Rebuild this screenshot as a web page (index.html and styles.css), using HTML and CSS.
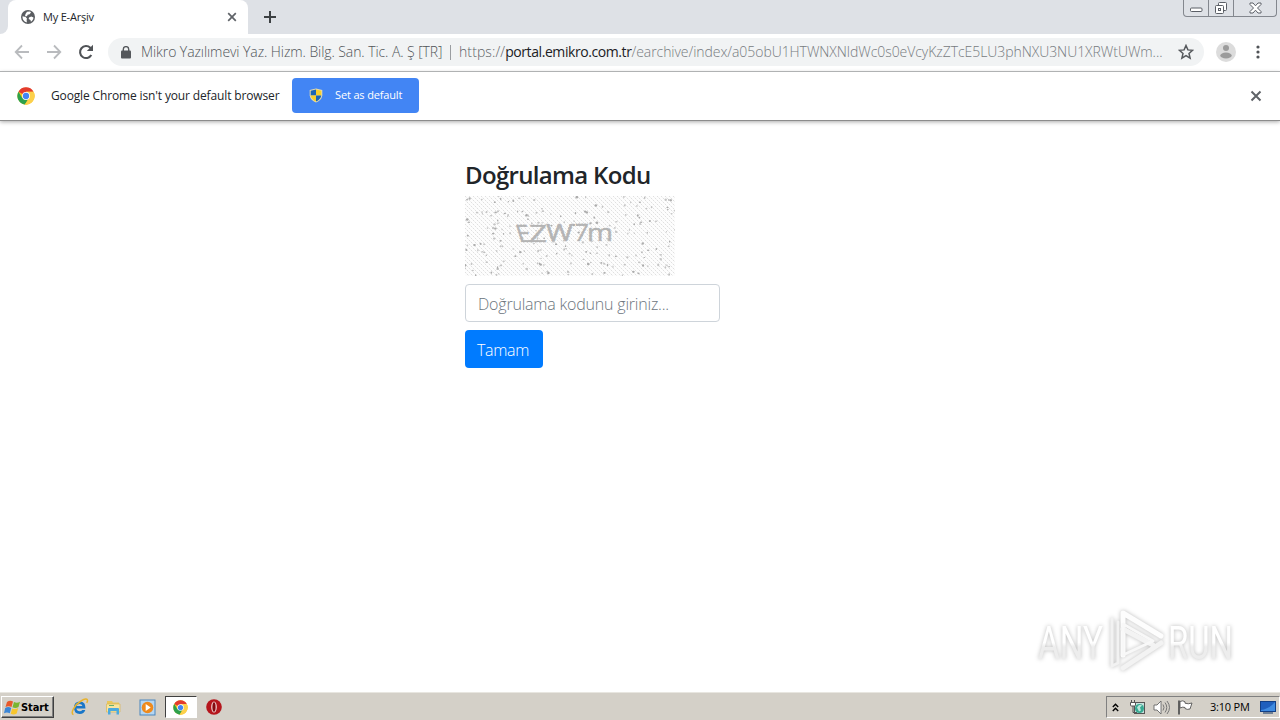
FILE: index.html
```html
<!DOCTYPE html>
<html lang="tr">
<head>
    <meta charset="UTF-8">
    <meta name="viewport" content="width=device-width, initial-scale=1.0">
    <title>My E-Arşiv</title>
    <link rel="stylesheet" href="styles.css">
</head>
<body>
    <svg width="0" height="0" class="defs">
        <symbol id="chrome" viewBox="0 0 24 24">
            <circle cx="12" cy="12" r="11.5" fill="#fbc116"/>
            <path d="M12 12 2 6.2A11.5 11.5 0 0 1 22 6.3H12z" fill="#e33b2e"/>
            <path d="M2 6.2A11.5 11.5 0 0 0 10.5 23.4L15 16 12 12 7 14.8z" fill="#2da14c"/>
            <path d="M22 6.3A11.5 11.5 0 0 1 10.5 23.4L16 15 12 6.3z" fill="#fcd04b"/>
            <circle cx="12" cy="12" r="5.2" fill="#fff"/>
            <circle cx="12" cy="12" r="4.2" fill="#4285f4"/>
        </symbol>
    </svg>

    <div class="tab-strip">
        <div class="prev-tab"></div>
        <div class="tab">
            <svg class="globe" width="14" height="14" viewBox="0 0 14 14">
                <circle cx="7" cy="7" r="7" fill="#5a5d61"/>
                <path d="M1.6 6.3 4.6 7l1.500 1.700-.5 1.100.3 2.600C3.200 12 1.200 9.500 1.600 6.300zM6 1.700l3-.1 1 1-1.400 1.700-2 .4-.6 1.500H4L4.500 4zM8 7.500l2.200-1 2.300.9c-.2 2-1.200 3.500-2.600 4.400L9.500 9.900 7.700 9z" fill="#fff"/>
            </svg>
            <span class="tab-title">My E-Arşiv</span>
            <svg class="tab-close" width="10" height="10" viewBox="0 0 10 10"><path d="M1.200 1.200l7.600 7.600M8.800 1.200 1.200 8.800" stroke="#5f6368" stroke-width="1.700"/></svg>
        </div>
        <svg class="new-tab" width="14" height="14" viewBox="0 0 14 14"><path d="M7 1v12M1 7h12" stroke="#3c4043" stroke-width="2"/></svg>
        <div class="window-buttons">
            <div class="wb">
                <svg width="13" height="6" viewBox="0 0 13 6"><rect x=".5" y="1" width="11.500" height="3.500" rx="1" fill="#fff" stroke="#5b5f66"/></svg>
            </div>
            <div class="wb">
                <svg width="14" height="14" viewBox="0 0 14 14"><g fill="#fff" stroke="#5b5f66"><rect x="4.500" y="1.500" width="8" height="8" rx="1"/><rect x="1.500" y="4.500" width="8" height="8" rx="1"/><rect x="4.500" y="7.500" width="2" height="2"/></g></svg>
            </div>
            <div class="wb wide">
                <svg width="13" height="12" viewBox="0 0 13 12"><path d="M1 1h3l2.500 2.800L9 1h3v1.500L8.500 6 12 9.500V11H9L6.500 8.200 4 11H1V9.500L4.500 6 1 2.500z" fill="#fff" stroke="#5b5f66"/></svg>
            </div>
        </div>
    </div>

    <div class="toolbar">
        <svg class="nav" width="16" height="16" viewBox="0 0 16 16"><path d="M15 8H2M8 1.500 1.700 8 8 14.500" fill="none" stroke="#b9bbbe" stroke-width="1.800"/></svg>
        <svg class="nav" width="16" height="16" viewBox="0 0 16 16"><path d="M1 8h13M8 1.500 14.300 8 8 14.500" fill="none" stroke="#b9bbbe" stroke-width="1.800"/></svg>
        <svg class="nav" width="16" height="16" viewBox="0 0 16 16"><path d="M13.300 11A6 6 0 1 1 12.300 3.800L14 5.500" fill="none" stroke="#505357" stroke-width="2.100"/><path d="M15 .8V7H8.800z" fill="#505357"/></svg>
        <div class="omnibox">
            <svg class="lock" width="10" height="13" viewBox="0 0 10 13"><rect y="4.500" width="10" height="8" rx="1" fill="#55585c"/><path d="M2.300 5V3.300a2.700 2.700 0 0 1 5.400 0V5" fill="none" stroke="#55585c" stroke-width="1.400"/></svg>
            <span class="owner">Mikro Yazılımevi Yaz. Hizm. Bilg. San. Tic. A. Ş [TR]</span>
            <span class="sep"></span>
            <span class="url"><span class="scheme">https://</span><span class="host">portal.emikro.com.tr</span><span class="path">/earchive/index/a05obU1HTWNXNldWc0s0eVcyKzZTcE5LU3phNXU3NU1XRWtUWm...</span></span>
            <svg class="star" width="16" height="16" viewBox="0 0 16 16"><path d="M8 1.500l1.900 4.400 4.700.4-3.600 3.100 1.100 4.700L8 11.600l-4.100 2.500L5 9.400 1.400 6.300l4.700-.4z" fill="none" stroke="#55585c" stroke-width="1.500"/></svg>
        </div>
        <svg class="avatar" width="20" height="20" viewBox="0 0 20 20"><circle cx="10" cy="10" r="10" fill="#dcdcdc"/><circle cx="10" cy="6" r="3" fill="#9b9b9b"/><ellipse cx="10" cy="13.500" rx="5.700" ry="3" fill="#9b9b9b"/></svg>
        <svg class="menu" width="4" height="16" viewBox="0 0 4 16"><g fill="#505357"><circle cx="2" cy="3" r="1.600"/><circle cx="2" cy="8" r="1.600"/><circle cx="2" cy="13" r="1.600"/></g></svg>
    </div>

    <div class="infobar">
        <svg class="info-logo" width="18" height="18"><use href="#chrome"/></svg>
        <span class="info-text">Google Chrome isn't your default browser</span>
        <button class="set-default">
            <svg width="14" height="15" viewBox="0 0 14 15"><path d="M7 .5 13.300 2v5.500Q12.500 12.500 7 14.500 1.500 12.500.7 7.500V2z" fill="#e6dcae"/><path d="M7 1.500v6H1.700V2.800z" fill="#1c66b5"/><path d="M7 1.500v6h5.300V2.800zM7 7.500v6Q2.500 11.500 1.700 7.500z" fill="#f8d02c"/><path d="M7 7.500v6q4.500-2 5.300-6z" fill="#1c66b5"/></svg>
            <span>Set as default</span>
        </button>
        <svg class="info-close" width="12" height="12" viewBox="0 0 12 12"><path d="M1.500 1.500l9 9M10.500 1.500l-9 9" stroke="#5f6368" stroke-width="2"/></svg>
    </div>

    <div class="page">
        <form class="verify">
            <h1>Doğrulama Kodu</h1>
            <svg class="captcha" width="210" height="80" viewBox="0 0 210 80">
                <defs>
                    <pattern id="hatch" width="4" height="4" patternUnits="userSpaceOnUse">
                        <rect width="4" height="4" fill="#fdfdfd"/>
                        <path d="M0 0h1v1H0zM2 2h1v1H2z" fill="#e0e0e0"/>
                        <path d="M1 1h1v1H1zM3 3h1v1H3z" fill="#f2f2f2"/>
                    </pattern>
                </defs>
                <rect width="210" height="80" fill="url(#hatch)"/>
                <g id="noise"></g>
                <g class="code">
                    <text transform="translate(54 46) skewX(17)" textLength="14" lengthAdjust="spacingAndGlyphs">E</text>
                    <text x="64" y="46" textLength="18" lengthAdjust="spacingAndGlyphs">Z</text>
                    <text x="81" y="45" textLength="27" lengthAdjust="spacingAndGlyphs">W</text>
                    <text transform="translate(109 45) skewX(-3)" textLength="14" lengthAdjust="spacingAndGlyphs">7</text>
                    <text x="122" y="45" textLength="26" lengthAdjust="spacingAndGlyphs">m</text>
                </g>
            </svg>
            <input type="text" placeholder="Doğrulama kodunu giriniz...">
            <button type="button" class="ok">Tamam</button>
        </form>
        <div class="watermark">
            <svg width="240" height="72" viewBox="0 0 240 72">
                <defs>
                    <linearGradient id="fade" x2="0" y2="1"><stop offset=".5" stop-color="#fff"/><stop offset=".58" stop-color="#ededed"/></linearGradient>
                </defs>
                <text x="8" y="55" textLength="65" lengthAdjust="spacingAndGlyphs">ANY</text>
                <g fill="none" stroke-width="5" stroke-linejoin="round" stroke-linecap="round">
                    <path d="M93 51V9L131 32" stroke="#fdfdfd"/>
                    <path d="M82 15v47l6-3V18" stroke="#f2f2f2" stroke-width="3"/>
                    <path d="M93 25l30 16M93 64l38-25" stroke="#f3f3f3"/>
                    <path d="M93 51l30-14-30-17z" stroke="#f8f8f8" stroke-width="3"/>
                </g>
                <text x="138" y="55" textLength="65" lengthAdjust="spacingAndGlyphs">RUN</text>
            </svg>
        </div>
    </div>

    <div class="taskbar">
        <div class="start">
            <svg width="17" height="15" viewBox="0 0 17 15"><path d="M3 2Q6-.2 9 1.500L7.500 7Q4.500 5.500 1.500 7z" fill="#e8592b"/><path d="M10 2q3 1.500 6-.3L14.500 7q-3 1.800-6 .2z" fill="#7ab530"/><path d="M1.200 8q3-1.800 6-.1l-1.400 5.300q-3-1.500-5.800.1z" fill="#3c86d6"/><path d="M8.200 8.400q3 1.500 6-.3L12.700 13.500q-3 1.800-6 .3z" fill="#f8c62d"/></svg>
            <span>Start</span>
        </div>
        <div class="launch">
            <svg width="18" height="18" viewBox="0 0 18 18"><path d="M14.500 10.500H5.500q.4 2.700 3.200 2.700 1.800 0 2.600-1.200h3Q13 16 8.800 16 3 16 3 9.800T8.900 3.500q5.800 0 5.600 7zM5.600 8h5.800Q11 6 8.600 6T5.600 8z" fill="#1976c8"/><path d="M2.500 16.500C-1 16 3 7 10 3q6-3.500 6.500-.8.200 1-.8 2.600" fill="none" stroke="#e9b32c" stroke-width="1.500"/></svg>
        </div>
        <div class="launch">
            <svg width="17" height="17" viewBox="0 0 17 17"><path d="M2 2h5l1 1.500h6V13H2z" fill="#eac75c"/><path d="M1.500 5h13.500v8H1.500z" fill="#f8e5a0" stroke="#d9b657" stroke-width=".7"/><path d="M3 15.500V10q0-1 1-1h9q1 0 1 1v5.500h-2.500V12h-6v3.500z" fill="#4ba9de"/><path d="M4 6.500h5" stroke="#67b06a"/></svg>
        </div>
        <div class="launch">
            <svg width="17" height="17" viewBox="0 0 17 17"><rect x="1" y="1" width="15" height="15" fill="#b5d6f2" stroke="#4a86bd"/><circle cx="8.500" cy="8.500" r="5.800" fill="#ee8a1d"/><path d="M6.700 5v7l5-3.500z" fill="#fff"/></svg>
        </div>
        <div class="launch active">
            <svg width="15" height="15"><use href="#chrome"/></svg>
        </div>
        <div class="launch">
            <svg width="16" height="16" viewBox="0 0 16 16"><circle cx="8" cy="8" r="7.800" fill="#b5151c"/><ellipse cx="8" cy="8" rx="2.800" ry="5.500" fill="#f5dada"/><ellipse cx="8" cy="8" rx="1.600" ry="4.700" fill="#85090f"/></svg>
        </div>
        <div class="tray">
            <svg class="chevrons" width="7" height="9" viewBox="0 0 7 9"><path d="M.8 4 3.500 1.300 6.200 4M.8 8 3.500 5.300 6.200 8" fill="none" stroke="#000" stroke-width="1.400"/></svg>
            <svg width="17" height="16" viewBox="0 0 17 16"><rect x="5.500" y="3.500" width="10" height="11" fill="#c5e0dc" stroke="#555"/><path d="M1.500 3.500h5V6q0 1-1 1h-3q-1 0-1-1z" fill="#fff" stroke="#555"/><path d="M2.500 1v2.500M5.500 1v2.500M4 7v6.500h4" fill="none" stroke="#555"/><circle cx="10.500" cy="9.500" r="4.500" fill="#36a890"/><path d="M8 8.500q2-4 5-2l-2 2 1 3-2 1z" fill="#b9e5da"/></svg>
            <svg width="17" height="15" viewBox="0 0 17 15"><path d="M1 5h3l4-4v13l-4-4H1z" fill="#fff" stroke="#666" stroke-width=".9"/><path d="M10 4.500q2 3 0 6M12 2.500q3.500 5 0 10M14 1q5 6.500 0 13" fill="none" stroke="#777"/></svg>
            <svg width="17" height="15" viewBox="0 0 17 15"><path d="M2 .5v14" stroke="#555" stroke-width="1.800"/><path d="M3 1.500q3-1.500 5 .3v1.400q3 1.200 7-.2l-2 6q-3 1-5-.5v-1Q6 6.500 3 8z" fill="#fff" stroke="#555" stroke-width=".9"/></svg>
            <span class="clock">3:10 PM</span>
            <svg class="desktop" width="16" height="13" viewBox="0 0 16 13"><rect x=".5" y=".5" width="15" height="10" fill="#1f5fbd" stroke="#123f85"/><path d="M1 9Q9 8 15 1v9H1z" fill="#3f8be0"/><path d="M3 12h10" stroke="#506784" stroke-width="1.500"/></svg>
        </div>
    </div>

    <script>
        const noise = document.getElementById('noise');
        let seed = 37;

        function rnd() {
            seed = (seed * 16807) % 2147483647;
            return seed / 2147483647;
        }

        // speckles behind the code
        for (let i = 0; i < 210; i++) {
            const dot = document.createElementNS('http://www.w3.org/2000/svg', 'ellipse');
            dot.setAttribute('cx', rnd() * 210);
            dot.setAttribute('cy', rnd() * 80);
            dot.setAttribute('rx', 0.6 + rnd() * 0.8);
            dot.setAttribute('ry', 0.6 + rnd() * 0.7);
            dot.setAttribute('fill', rnd() > 0.5 ? '#adadad' : '#c6c6c6');
            noise.appendChild(dot);
        }
    </script>
</body>
</html>
```
FILE: styles.css
```css
* {
    box-sizing: border-box;
}
body {
    margin: 0;
    height: 720px;
    overflow: hidden;
    display: flex;
    flex-direction: column;
    background-color: #fff;
    font-family: "Open Sans", "Noto Sans", sans-serif;
    color: #212529;
}
svg {
    display: block;
    flex: none;
}
.defs {
    position: absolute;
}
span {
    white-space: nowrap;
}
.tab-strip {
    height: 34px;
    flex: none;
    display: flex;
    background-color: #dee1e6;
}
.prev-tab {
    width: 8px;
    background-color: #fff;
}
.prev-tab::before {
    content: "";
    display: block;
    height: 34px;
    background-color: #dee1e6;
    border-bottom-right-radius: 8px;
}
.tab {
    width: 240px;
    display: flex;
    align-items: center;
    padding: 0 11px 0 13px;
    background-color: #fff;
    border-radius: 8px 8px 0 0;
}
.tab-title {
    margin: -2px 0 0 8px;
    font-size: 11px;
    letter-spacing: -0.2px;
}
.tab-close {
    margin-left: auto;
}
.new-tab {
    margin: 10px 0 0 15px;
}
.window-buttons {
    margin: 0 3px 0 auto;
    height: 17px;
    display: flex;
    border: 1px solid #83878e;
    border-top: none;
    border-radius: 0 0 4px 4px;
}
.wb {
    width: 25px;
    display: flex;
    align-items: center;
    justify-content: center;
    border-right: 1px solid #83878e;
}
.wb:first-child svg {
    margin-top: 4px;
}
.wb.wide {
    width: 42px;
    border-right: none;
}
.toolbar {
    height: 38px;
    flex: none;
    display: flex;
    align-items: center;
    padding: 0 20px 1px 14px;
    border-bottom: 1px solid #b2b4b6;
}
.nav {
    margin-right: 16px;
}
.omnibox {
    width: 1096px;
    height: 28px;
    margin-left: -2px;
    display: flex;
    align-items: center;
    padding: 0 10px 0 13px;
    background-color: #f1f3f4;
    border-radius: 14px;
    font-size: 14px;
    font-weight: 300;
    color: #5f6368;
}
.owner {
    width: 302px;
    margin: -2px 0 0 10px;
    letter-spacing: -0.08px;
    color: #505458;
}
.sep {
    width: 1px;
    height: 15px;
    margin: 0 8px 0 7px;
    background-color: #9a9da1;
}
.url {
    margin-top: -2px;
    letter-spacing: 0.1px;
}
.host {
    color: #202124;
    font-weight: 400;
    letter-spacing: -0.42px;
}
.path {
    color: #777b80;
    letter-spacing: -0.06px;
}
.star {
    margin-left: auto;
}
.avatar {
    margin-left: 12px;
}
.menu {
    margin-left: auto;
}
.infobar {
    position: relative;
    height: 49px;
    flex: none;
    display: flex;
    align-items: center;
    padding: 0 18px 0 17px;
    border-bottom: 1px solid #8c8c8c;
    box-shadow: 0 1px 4px #aaa;
}
.info-text {
    width: 229px;
    margin: -1px 0 0 16px;
    font-size: 12px;
    letter-spacing: -0.14px;
}
.set-default {
    width: 127px;
    height: 35px;
    margin: -1px 0 0 12px;
    display: flex;
    align-items: center;
    padding: 0 0 0 17px;
    gap: 12px;
    border: none;
    border-radius: 4px;
    background-color: #4285f4;
    color: #fff;
    font-family: inherit;
    font-size: 11px;
    letter-spacing: -0.15px;
}
.set-default span {
    margin-top: -2px;
}
.info-close {
    margin-left: auto;
}
.page {
    position: relative;
    flex: 1;
    display: flex;
    justify-content: center;
}
.verify {
    width: 350px;
    margin-top: 39px;
    display: flex;
    flex-direction: column;
    align-items: flex-start;
}
.verify h1 {
    margin: 0 0 6px;
    font-size: 24px;
    line-height: 30px;
    font-weight: 600;
    letter-spacing: -0.67px;
}
.captcha {
    margin-bottom: 8px;
}
.code text {
    font-family: "Open Sans", sans-serif;
    font-size: 24px;
    fill: #b4b4b4;
    stroke: #b4b4b4;
    stroke-width: 0.7px;
    stroke-dasharray: 2 1;
}
.verify input {
    width: 255px;
    height: 38px;
    margin-bottom: 8px;
    padding: 1px 12px 0;
    border: 1px solid #ced4da;
    border-radius: 4px;
    font-family: inherit;
    font-size: 16px;
    font-weight: 300;
    letter-spacing: -0.2px;
}
.verify input::placeholder {
    color: #6c757d;
}
.ok {
    width: 78px;
    height: 38px;
    padding: 1px 2px 0 0;
    border: none;
    border-radius: 4px;
    background-color: #007bff;
    color: #fff;
    font-family: inherit;
    font-size: 16px;
    font-weight: 300;
    letter-spacing: -0.3px;
}
.watermark {
    position: absolute;
    right: 10px;
    bottom: 16px;
    filter: drop-shadow(0 0 2px #bbb);
}
.watermark text {
    font-family: Roboto, sans-serif;
    font-size: 47px;
    font-weight: 400;
    fill: url(#fade);
}
.taskbar {
    height: 28px;
    flex: none;
    display: flex;
    align-items: center;
    padding: 1px 0 0 1px;
    background-color: #d4d0c8;
    border-top: 1px solid #e8e6e0;
}
.start {
    width: 53px;
    height: 22px;
    margin-right: 10px;
    display: flex;
    align-items: center;
    padding-left: 2px;
    border: 1px solid;
    border-color: #fff #404040 #404040 #fff;
    box-shadow: inset -1px -1px #808080;
    font-family: "DejaVu Sans Condensed", "DejaVu Sans", sans-serif;
    font-size: 11px;
    font-weight: 700;
    letter-spacing: -0.1px;
    color: #000;
}
.launch {
    width: 32px;
    height: 22px;
    margin-right: 1.5px;
    display: flex;
    align-items: center;
    justify-content: center;
}
.launch.active {
    background-color: #fff;
    border: 1px solid;
    border-color: #404040 #fff #fff #404040;
}
.tray {
    width: 174px;
    height: 22px;
    margin-left: auto;
    display: flex;
    align-items: center;
    gap: 7px;
    padding: 0 3px 0 5px;
    border: 1px solid;
    border-color: #808080 #fff #fff #808080;
}
.clock {
    margin: -2px 0 0 9px;
    font-size: 11px;
    letter-spacing: -0.2px;
    color: #000;
}
.chevrons {
    margin-right: 3px;
}
.desktop {
    margin-left: auto;
}
```
